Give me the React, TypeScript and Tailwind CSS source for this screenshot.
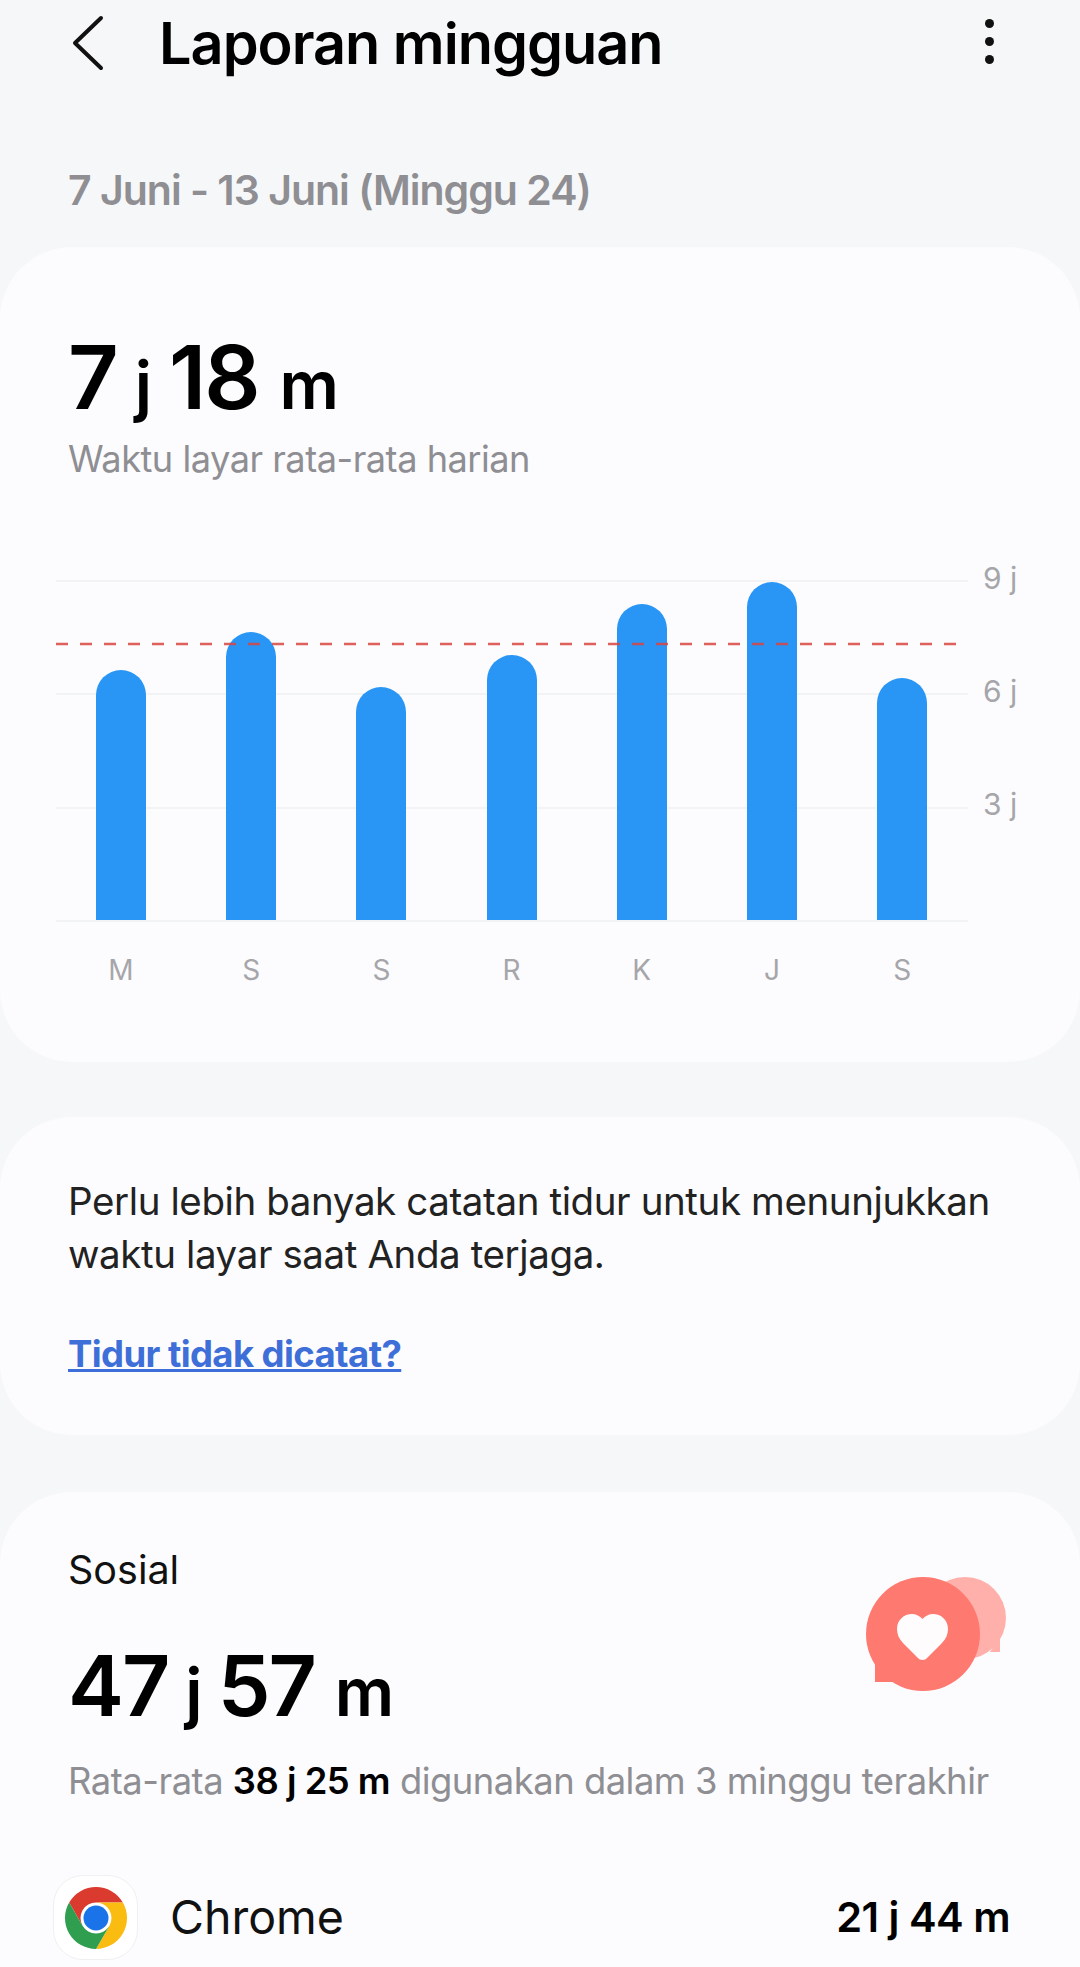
export default function App() {
  const bars = [250, 288, 233, 265, 316, 338, 242];
  const days = ["M", "S", "S", "R", "K", "J", "S"];
  const ticks = ["9 j", "6 j", "3 j"];
  return (
    <div className="w-[1080px] h-[1967px] overflow-hidden bg-[#f6f7f9] font-['Inter',sans-serif] text-black">
      <header className="relative h-[88px] pl-[159px] flex items-center">
        <svg className="absolute left-[70px] top-[15px]" width="36" height="56" viewBox="0 0 36 56" fill="none">
          <path d="M31 3 L5 28 L31 53" stroke="#111" strokeWidth="4" strokeLinecap="round" strokeLinejoin="round" />
        </svg>
        <h1 className="text-[57.6px] font-semibold leading-none tracking-[-1px]">Laporan mingguan</h1>
        <div className="absolute left-[985px] top-[19px] flex flex-col gap-[9px]">
          <span className="w-[9px] h-[9px] rounded-full bg-[#111]" />
          <span className="w-[9px] h-[9px] rounded-full bg-[#111]" />
          <span className="w-[9px] h-[9px] rounded-full bg-[#111]" />
        </div>
      </header>
      <p className="pl-[68px] mt-[78px] h-[48px] leading-[48px] text-[41px] font-semibold text-[#8e8e93] tracking-[-1px]">7 Juni - 13 Juni (Minggu 24)</p>

      <section className="mt-[33px] h-[815px] rounded-[72px] bg-[#fcfcfe] pt-[86px]">
        <div className="pl-[68px] h-[104px] flex items-baseline font-semibold leading-none tracking-[-2px]">
          <span className="text-[88px]">7</span>
          <span className="text-[66px] ml-[18px]">j</span>
          <span className="text-[88px] ml-[19px]">18</span>
          <span className="text-[66px] ml-[21px]">m</span>
        </div>
        <p className="pl-[68px] mt-[0px] text-[36.2px] leading-[44px] text-[#8e8e93] tracking-[-0.5px]">Waktu layar rata-rata harian</p>
        <div className="relative ml-[56px] mt-[99px] w-[960px]">
          <div className="absolute left-0 top-[0px] w-[912px] h-[2px] bg-[#f2f3f5]" />
          <div className="absolute left-0 top-[113px] w-[912px] h-[2px] bg-[#f2f3f5]" />
          <div className="absolute left-0 top-[227px] w-[912px] h-[2px] bg-[#f2f3f5]" />
          <div className="absolute left-[927px] top-[-22px] whitespace-nowrap text-[30px] leading-[40px] text-[#a6a6aa]">{ticks[0]}</div>
          <div className="absolute left-[927px] top-[91px] whitespace-nowrap text-[30px] leading-[40px] text-[#a6a6aa]">{ticks[1]}</div>
          <div className="absolute left-[927px] top-[204px] whitespace-nowrap text-[30px] leading-[40px] text-[#a6a6aa]">{ticks[2]}</div>
          <div className="relative h-[342px] w-[912px] pl-[40px] flex items-end gap-[80.2px] border-b-2 border-[#f2f3f5]">
            {bars.map((h, i) => (
              <div key={i} className="w-[50px] rounded-t-[25px] bg-[#2996f5]" style={{ height: h }} />
            ))}
          </div>
          <svg className="absolute left-0 top-[62px]" width="901" height="4">
            <line x1="0" y1="2" x2="901" y2="2" stroke="#d8453f" strokeOpacity="0.85" strokeWidth="2.5" strokeDasharray="12 12" />
          </svg>
          <div className="pl-[40px] mt-[30px] flex gap-[80.2px]">
            {days.map((d, i) => (
              <span key={i} className="w-[50px] text-center text-[28px] leading-[36px] text-[#a6a6aa]">{d}</span>
            ))}
          </div>
        </div>
      </section>

      <section className="mt-[55px] h-[318px] rounded-[72px] bg-[#fcfcfe] pt-[58px] pl-[68px]">
        <p className="text-[38.5px] leading-[53px] text-[#222] tracking-[-0.4px] whitespace-nowrap">Perlu lebih banyak catatan tidur untuk menunjukkan<br />waktu layar saat Anda terjaga.</p>
        <a className="block mt-[50px] text-[36.5px] leading-[46px] font-bold text-[#3e6fd8] underline tracking-[-0.6px]">Tidur tidak dicatat?</a>
      </section>

      <section className="relative mt-[57px] h-[480px] rounded-t-[72px] bg-[#fcfcfe] pt-[56px]">
        <p className="pl-[68px] text-[39.5px] leading-[44px] text-[#111]">Sosial</p>
        <svg className="absolute left-[860px] top-[80px]" width="160" height="130" viewBox="860 1572 160 130">
          <g fill="#ffb0aa">
            <circle cx="965" cy="1618" r="41" />
            <path d="M990 1652 L1000 1652 L1000 1636 Z" />
          </g>
          <g fill="#fe7a70">
            <circle cx="923" cy="1634" r="57" />
            <path d="M875 1682 L875 1655 L897 1682 Z" />
          </g>
          <path d="M922.5 1660 C920.5 1660 919 1659 918 1658 L903 1643 C899 1639 897 1634 897 1629 C897 1620 904 1614 912 1614 C916 1614 920 1616 922.5 1619 C925 1616 929 1614 933 1614 C941 1614 948 1620 948 1629 C948 1634 946 1639 942 1643 L927 1658 C926 1659 924.5 1660 922.5 1660 Z" fill="#fefcfc" />
        </svg>
        <div className="pl-[68px] mt-[52px] h-[104px] flex items-baseline font-semibold leading-none tracking-[-2px]">
          <span className="text-[84px]">47</span>
          <span className="text-[66px] ml-[17px]">j</span>
          <span className="text-[84px] ml-[17px]">57</span>
          <span className="text-[66px] ml-[20px]">m</span>
        </div>
        <p className="pl-[68px] mt-[11px] text-[36.4px] leading-[44px] text-[#8e8e93] tracking-[-0.5px] whitespace-nowrap">
          Rata-rata <b className="font-semibold text-black">38 j 25 m</b> digunakan dalam 3 minggu terakhir
        </p>
        <div className="mt-[72px] pl-[53px] pr-[70px] flex items-center">
          <div className="w-[85px] h-[85px] rounded-[30px] bg-white border border-[#f0f0f2] flex items-center justify-center">
            <svg width="64" height="64" viewBox="-32 -32 64 64">
              <path d="M26.85 -15.5 A31 31 0 0 0 -26.85 -15.5 L-13.42 7.75 A15.5 15.5 0 0 1 0 -15.5 Z" fill="#db3a2f" />
              <path d="M26.85 -15.5 A31 31 0 0 0 -26.85 -15.5 L-13.42 7.75 A15.5 15.5 0 0 1 0 -15.5 Z" fill="#fbbc12" transform="rotate(120)" />
              <path d="M26.85 -15.5 A31 31 0 0 0 -26.85 -15.5 L-13.42 7.75 A15.5 15.5 0 0 1 0 -15.5 Z" fill="#2f9e4f" transform="rotate(240)" />
              <circle r="12.5" fill="#1a73e8" />
            </svg>
          </div>
          <span className="ml-[32px] text-[46.5px] text-[#111] leading-none">Chrome</span>
          <span className="ml-auto text-[41.5px] font-semibold leading-none tracking-[-0.5px]">21 j 44 m</span>
        </div>
      </section>
    </div>
  );
}
